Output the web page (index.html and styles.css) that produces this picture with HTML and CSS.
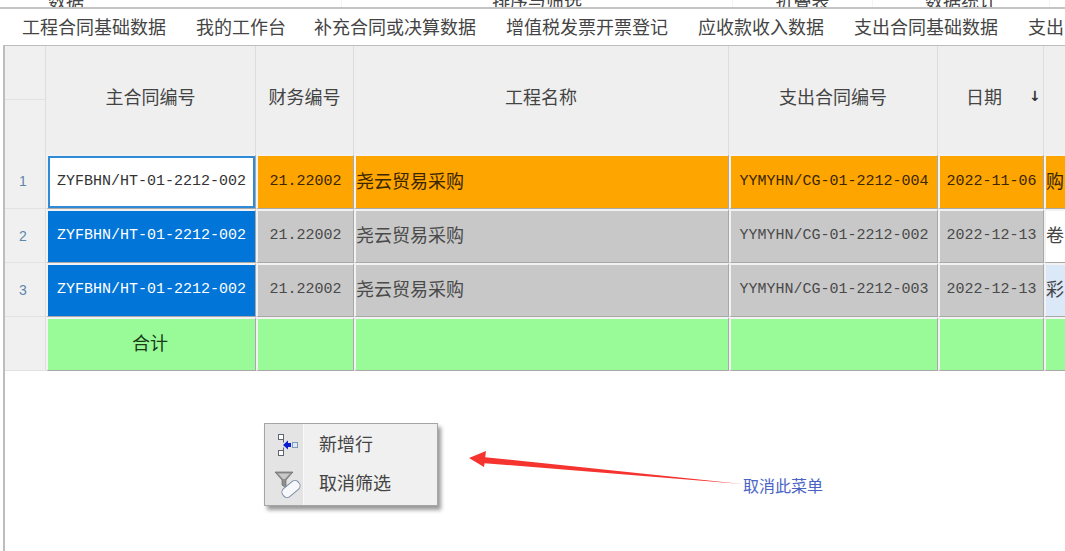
FILE: index.html
```html
<!DOCTYPE html>
<html lang="zh-CN">
<head>
<meta charset="utf-8">
<title>工程合同基础数据</title>
<link rel="stylesheet" href="styles.css">
</head>
<body>
<div class="ribbon">
  <div class="ribbon-group first">数据</div>
  <div class="ribbon-group">排序与筛选</div>
  <div class="ribbon-group">折叠表</div>
  <div class="ribbon-group">数据统计</div>
</div>
<nav class="tabs">
  <span>工程合同基础数据</span>
  <span>我的工作台</span>
  <span class="tab-tight">补充合同或决算数据</span>
  <span>增值税发票开票登记</span>
  <span>应收款收入数据</span>
  <span>支出合同基础数据</span>
  <span>支出</span>
</nav>
<main class="sheet">
  <div class="grid">
    <div class="corner"><i></i><i></i></div>
    <div class="head">主合同编号</div>
    <div class="head">财务编号</div>
    <div class="head">工程名称</div>
    <div class="head">支出合同编号</div>
    <div class="head date"><span>日期</span><b>↓</b></div>
    <div class="head"></div>

    <div class="num">1</div>
    <div class="cell code focus">ZYFBHN/HT-01-2212-002</div>
    <div class="cell code orange">21.22002</div>
    <div class="cell name orange">尧云贸易采购</div>
    <div class="cell code orange">YYMYHN/CG-01-2212-004</div>
    <div class="cell code orange">2022-11-06</div>
    <div class="cell name orange">购</div>

    <div class="num">2</div>
    <div class="cell code blue">ZYFBHN/HT-01-2212-002</div>
    <div class="cell code gray">21.22002</div>
    <div class="cell name gray">尧云贸易采购</div>
    <div class="cell code gray">YYMYHN/CG-01-2212-002</div>
    <div class="cell code gray">2022-12-13</div>
    <div class="cell name white">卷</div>

    <div class="num">3</div>
    <div class="cell code blue">ZYFBHN/HT-01-2212-002</div>
    <div class="cell code gray">21.22002</div>
    <div class="cell name gray">尧云贸易采购</div>
    <div class="cell code gray">YYMYHN/CG-01-2212-003</div>
    <div class="cell code gray">2022-12-13</div>
    <div class="cell name pale">彩</div>

    <div class="num"></div>
    <div class="cell total">合计</div>
    <div class="cell total"></div>
    <div class="cell total"></div>
    <div class="cell total"></div>
    <div class="cell total"></div>
    <div class="cell total"></div>
  </div>
</main>

<div class="menu">
  <div class="menu-item">
    <span class="menu-icon">
      <svg width="28" height="28" viewBox="0 0 28 28">
        <rect x="7.5" y="3.5" width="5" height="5" fill="#fff" stroke="#5f6670"/>
        <rect x="7.5" y="19.5" width="5" height="5" fill="#fff" stroke="#5f6670"/>
        <rect x="21.5" y="11.5" width="5" height="5" fill="#dfe9f5" stroke="#7d9ab8"/>
        <path d="M12.5 8.5v3M12.5 16.5v3" stroke="#5f6670"/>
        <path d="M12 14l5-4.5V12h3v4h-3v2.5z" fill="#0a1ed0"/>
      </svg>
    </span>
    <span class="menu-label">新增行</span>
  </div>
  <div class="menu-item">
    <span class="menu-icon">
      <svg width="30" height="30" viewBox="0 0 30 30">
        <path d="M4 3h18l-7 8v8l-4-3v-5z" fill="#8f8f8f" stroke="#6a6a6a" stroke-width=".7"/>
        <path d="M7 4.5h12l-5 5.5h-2z" fill="#c9c9c9"/>
        <g transform="rotate(-40 20 20)">
          <rect x="10" y="15" width="20" height="10" rx="4.5" fill="#f6f8fb" stroke="#7f8da5"/>
        </g>
      </svg>
    </span>
    <span class="menu-label">取消筛选</span>
  </div>
</div>

<svg class="arrow" width="290" height="50" viewBox="0 0 290 50">
  <path d="M1 20L18 13l-.8 6.2L274 46 16.5 25.2 16 29z" fill="#f5332f"/>
</svg>
<div class="note">取消此菜单</div>
</body>
</html>
```
FILE: styles.css
```css
* { box-sizing: border-box; }
html, body { margin: 0; padding: 0; }
body {
  width: 1065px;
  height: 551px;
  overflow: hidden;
  position: relative;
  display: flex;
  flex-direction: column;
  background: #fff;
  color: #444;
  font-family: "Noto Sans CJK SC", "Liberation Sans", sans-serif;
  font-size: 18px;
}
.ribbon {
  flex: none;
  height: 9px;
  overflow: hidden;
  display: grid;
  grid-template-columns: 342px 391px 140px 177px 15px;
  border-bottom: 2px solid #c4c4c4;
}
.ribbon-group {
  height: 7px;
  line-height: 0;
  text-align: center;
  white-space: nowrap;
  border-right: 1px solid #f4f4f4;
}
.ribbon-group.first { text-align: left; padding-left: 48px; }
.tabs {
  flex: none;
  height: 36px;
  display: flex;
  align-items: center;
  gap: 30px;
  padding: 0 0 2px 22px;
  white-space: nowrap;
  line-height: 1;
}
.tab-tight { margin-left: -2px; }
.sheet {
  flex: 1;
  margin-left: 3px;
  border-left: 2px solid #bdbdbd;
  border-top: 1px solid #bdbdbd;
  min-height: 0;
}
.grid {
  display: grid;
  grid-template-columns: 41px 210px 98px 375px 209px 106px 30px;
  grid-template-rows: 108px 55px 54px 54px 54px;
}
.corner {
  background: #f0f0f0;
  display: grid;
  grid-template-rows: 1fr 1fr;
  border-right: 1px solid #dedede;
}
.corner i:first-child { border-bottom: 1px solid #e2e2e2; }
.head {
  background: #efefef;
  border-right: 1px solid #dcdcdc;
  display: flex;
  align-items: center;
  justify-content: center;
  padding-bottom: 8px;
}
.head.date {
  justify-content: flex-start;
  padding-left: 28px;
}
.head.date b {
  margin-left: 27px;
  color: #333;
  font: 700 14px "DejaVu Sans", sans-serif;
}
.num {
  background: #f0f0f0;
  border-right: 1px solid #dedede;
  border-bottom: 1px solid #e2e2e2;
  display: flex;
  align-items: center;
  padding-left: 14px;
  color: #5d87ab;
  font: 14px "Liberation Sans", sans-serif;
}
.cell {
  display: flex;
  align-items: center;
  justify-content: center;
  border-style: solid;
  border-width: 2px 1px 1px 2px;
  border-color: #f2f2f2 #a8a8a8 #a8a8a8 #f2f2f2;
  white-space: nowrap;
  overflow: hidden;
}
.code {
  font-family: "Liberation Mono", "Noto Sans CJK SC", monospace;
  font-size: 15px;
  padding-bottom: 2px;
}
.name { justify-content: flex-start; padding: 0 0 5px 0; }
.orange { background: #ffa500; color: #3a2600; }
.gray { background: #c8c8c8; color: #4a4a4a; }
.blue { background: #0175d8; color: #fff; }
.white { background: #fff; }
.pale { background: #dbe8f7; }
.focus {
  background: #fff;
  box-shadow: inset 0 0 0 2px #2f8ad8;
  color: #333;
}
.total {
  background: #99fb97;
  color: #1a3a1a;
  padding: 0 3px 5px 0;
}
.menu {
  position: absolute;
  left: 264px;
  top: 423px;
  width: 174px;
  height: 83px;
  padding: 1px 0;
  border: 1px solid #a5a5a5;
  box-shadow: 3px 4px 4px #9a9a9a;
  background: linear-gradient(to right, #e4e4e4 38px, #f8f8f8 38px, #f8f8f8 39px, #f0f0f0 39px);
  display: grid;
  grid-template-rows: 1fr 1fr;
}
.menu-item {
  display: flex;
  align-items: center;
}
.menu-icon {
  width: 54px;
  padding-left: 6px;
  display: flex;
  align-items: center;
}
.menu-label { padding-bottom: 4px; }
.arrow {
  position: absolute;
  left: 468px;
  top: 438px;
}
.note {
  position: absolute;
  left: 743px;
  top: 475px;
  font-size: 16px;
  line-height: 20px;
  color: #4a63c4;
}
```
